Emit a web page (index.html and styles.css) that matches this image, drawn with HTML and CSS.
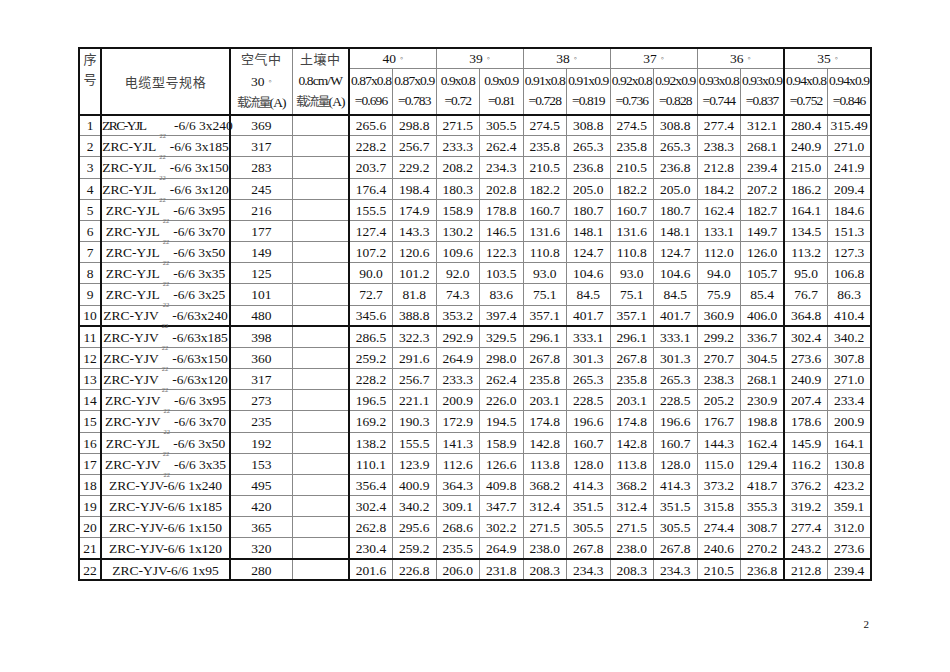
FILE: index.html
```html
<!DOCTYPE html>
<html lang="zh">
<head>
<meta charset="utf-8">
<title>电缆载流量表</title>
<link rel="stylesheet" href="styles.css">
</head>
<body>
<div class="page">
<table class="grid">
<colgroup>
<col class="c-no dk">
<col class="c-spec dk">
<col class="c-air">
<col class="c-soil dk">
<col class="c-v"><col class="c-v">
<col class="c-v"><col class="c-v">
<col class="c-v"><col class="c-v">
<col class="c-v"><col class="c-v">
<col class="c-v"><col class="c-v dk">
<col class="c-v"><col class="c-v dk">
</colgroup>
<thead>
<tr class="h1">
<th rowspan="2" class="no-h cjk">序<br>号</th>
<th rowspan="2" class="spec-h cjk">电缆型号规格</th>
<th rowspan="2" class="top-h"><span class="cjk wide-cjk">空气中</span><br>30<span class="deg">◦</span><br><span class="load"><span class="cjk squeeze">载流量</span><span class="cond">(A)</span></span></th>
<th rowspan="2" class="top-h"><span class="cjk wide-cjk">土壤中</span><br><span class="cond">0.8cm/W</span><br><span class="load"><span class="cjk squeeze">载流量</span><span class="cond">(A)</span></span></th>
<th colspan="2" class="grp">40<span class="deg">◦</span></th>
<th colspan="2" class="grp">39<span class="deg">◦</span></th>
<th colspan="2" class="grp">38<span class="deg">◦</span></th>
<th colspan="2" class="grp">37<span class="deg">◦</span></th>
<th colspan="2" class="grp">36<span class="deg">◦</span></th>
<th colspan="2" class="grp">35<span class="deg">◦</span></th>
</tr>
<tr class="h2">
<th class="fac"><span class="cond">0.87x0.8</span><br><span class="cond">=0.696</span></th>
<th class="fac"><span class="cond">0.87x0.9</span><br><span class="cond">=0.783</span></th>
<th class="fac"><span class="cond">0.9x0.8</span><br><span class="cond">=0.72</span></th>
<th class="fac"><span class="cond">0.9x0.9</span><br><span class="cond">=0.81</span></th>
<th class="fac"><span class="cond">0.91x0.8</span><br><span class="cond">=0.728</span></th>
<th class="fac"><span class="cond">0.91x0.9</span><br><span class="cond">=0.819</span></th>
<th class="fac"><span class="cond">0.92x0.8</span><br><span class="cond">=0.736</span></th>
<th class="fac"><span class="cond">0.92x0.9</span><br><span class="cond">=0.828</span></th>
<th class="fac"><span class="cond">0.93x0.8</span><br><span class="cond">=0.744</span></th>
<th class="fac"><span class="cond">0.93x0.9</span><br><span class="cond">=0.837</span></th>
<th class="fac"><span class="cond">0.94x0.8</span><br><span class="cond">=0.752</span></th>
<th class="fac"><span class="cond">0.94x0.9</span><br><span class="cond">=0.846</span></th>
</tr>
</thead>
<tbody>
<tr><td>1</td><td class="spec"><span class="tight">ZRC-YJL</span><span class="sub wide">22</span>-6/6 3x240</td><td>369</td><td></td><td>265.6</td><td>298.8</td><td>271.5</td><td>305.5</td><td>274.5</td><td>308.8</td><td>274.5</td><td>308.8</td><td>277.4</td><td>312.1</td><td>280.4</td><td>315.49</td></tr>
<tr><td>2</td><td class="spec">ZRC-YJL<span class="sub">22</span>-6/6 3x185</td><td>317</td><td></td><td>228.2</td><td>256.7</td><td>233.3</td><td>262.4</td><td>235.8</td><td>265.3</td><td>235.8</td><td>265.3</td><td>238.3</td><td>268.1</td><td>240.9</td><td>271.0</td></tr>
<tr><td>3</td><td class="spec">ZRC-YJL<span class="sub">22</span>-6/6 3x150</td><td>283</td><td></td><td>203.7</td><td>229.2</td><td>208.2</td><td>234.3</td><td>210.5</td><td>236.8</td><td>210.5</td><td>236.8</td><td>212.8</td><td>239.4</td><td>215.0</td><td>241.9</td></tr>
<tr><td>4</td><td class="spec">ZRC-YJL<span class="sub">22</span>-6/6 3x120</td><td>245</td><td></td><td>176.4</td><td>198.4</td><td>180.3</td><td>202.8</td><td>182.2</td><td>205.0</td><td>182.2</td><td>205.0</td><td>184.2</td><td>207.2</td><td>186.2</td><td>209.4</td></tr>
<tr><td>5</td><td class="spec">ZRC-YJL<span class="sub">22</span>-6/6 3x95</td><td>216</td><td></td><td>155.5</td><td>174.9</td><td>158.9</td><td>178.8</td><td>160.7</td><td>180.7</td><td>160.7</td><td>180.7</td><td>162.4</td><td>182.7</td><td>164.1</td><td>184.6</td></tr>
<tr><td>6</td><td class="spec">ZRC-YJL<span class="sub">22</span>-6/6 3x70</td><td>177</td><td></td><td>127.4</td><td>143.3</td><td>130.2</td><td>146.5</td><td>131.6</td><td>148.1</td><td>131.6</td><td>148.1</td><td>133.1</td><td>149.7</td><td>134.5</td><td>151.3</td></tr>
<tr><td>7</td><td class="spec">ZRC-YJL<span class="sub">22</span>-6/6 3x50</td><td>149</td><td></td><td>107.2</td><td>120.6</td><td>109.6</td><td>122.3</td><td>110.8</td><td>124.7</td><td>110.8</td><td>124.7</td><td>112.0</td><td>126.0</td><td>113.2</td><td>127.3</td></tr>
<tr><td>8</td><td class="spec">ZRC-YJL<span class="sub">22</span>-6/6 3x35</td><td>125</td><td></td><td>90.0</td><td>101.2</td><td>92.0</td><td>103.5</td><td>93.0</td><td>104.6</td><td>93.0</td><td>104.6</td><td>94.0</td><td>105.7</td><td>95.0</td><td>106.8</td></tr>
<tr><td>9</td><td class="spec">ZRC-YJL<span class="sub">22</span>-6/6 3x25</td><td>101</td><td></td><td>72.7</td><td>81.8</td><td>74.3</td><td>83.6</td><td>75.1</td><td>84.5</td><td>75.1</td><td>84.5</td><td>75.9</td><td>85.4</td><td>76.7</td><td>86.3</td></tr>
<tr class="sep"><td>10</td><td class="spec">ZRC-YJV<span class="sub">22</span>-6/63x240</td><td>480</td><td></td><td>345.6</td><td>388.8</td><td>353.2</td><td>397.4</td><td>357.1</td><td>401.7</td><td>357.1</td><td>401.7</td><td>360.9</td><td>406.0</td><td>364.8</td><td>410.4</td></tr>
<tr><td>11</td><td class="spec">ZRC-YJV<span class="sub">22</span>-6/63x185</td><td>398</td><td></td><td>286.5</td><td>322.3</td><td>292.9</td><td>329.5</td><td>296.1</td><td>333.1</td><td>296.1</td><td>333.1</td><td>299.2</td><td>336.7</td><td>302.4</td><td>340.2</td></tr>
<tr><td>12</td><td class="spec">ZRC-YJV<span class="sub">22</span>-6/63x150</td><td>360</td><td></td><td>259.2</td><td>291.6</td><td>264.9</td><td>298.0</td><td>267.8</td><td>301.3</td><td>267.8</td><td>301.3</td><td>270.7</td><td>304.5</td><td>273.6</td><td>307.8</td></tr>
<tr><td>13</td><td class="spec">ZRC-YJV<span class="sub">22</span>-6/63x120</td><td>317</td><td></td><td>228.2</td><td>256.7</td><td>233.3</td><td>262.4</td><td>235.8</td><td>265.3</td><td>235.8</td><td>265.3</td><td>238.3</td><td>268.1</td><td>240.9</td><td>271.0</td></tr>
<tr><td>14</td><td class="spec">ZRC-YJV<span class="sub">22</span>-6/6 3x95</td><td>273</td><td></td><td>196.5</td><td>221.1</td><td>200.9</td><td>226.0</td><td>203.1</td><td>228.5</td><td>203.1</td><td>228.5</td><td>205.2</td><td>230.9</td><td>207.4</td><td>233.4</td></tr>
<tr><td>15</td><td class="spec">ZRC-YJV<span class="sub">22</span>-6/6 3x70</td><td>235</td><td></td><td>169.2</td><td>190.3</td><td>172.9</td><td>194.5</td><td>174.8</td><td>196.6</td><td>174.8</td><td>196.6</td><td>176.7</td><td>198.8</td><td>178.6</td><td>200.9</td></tr>
<tr><td>16</td><td class="spec">ZRC-YJL<span class="sub">22</span>-6/6 3x50</td><td>192</td><td></td><td>138.2</td><td>155.5</td><td>141.3</td><td>158.9</td><td>142.8</td><td>160.7</td><td>142.8</td><td>160.7</td><td>144.3</td><td>162.4</td><td>145.9</td><td>164.1</td></tr>
<tr><td>17</td><td class="spec">ZRC-YJV<span class="sub">22</span>-6/6 3x35</td><td>153</td><td></td><td>110.1</td><td>123.9</td><td>112.6</td><td>126.6</td><td>113.8</td><td>128.0</td><td>113.8</td><td>128.0</td><td>115.0</td><td>129.4</td><td>116.2</td><td>130.8</td></tr>
<tr><td>18</td><td class="spec">ZRC-YJV-6/6 1x240</td><td>495</td><td></td><td>356.4</td><td>400.9</td><td>364.3</td><td>409.8</td><td>368.2</td><td>414.3</td><td>368.2</td><td>414.3</td><td>373.2</td><td>418.7</td><td>376.2</td><td>423.2</td></tr>
<tr><td>19</td><td class="spec">ZRC-YJV-6/6 1x185</td><td>420</td><td></td><td>302.4</td><td>340.2</td><td>309.1</td><td>347.7</td><td>312.4</td><td>351.5</td><td>312.4</td><td>351.5</td><td>315.8</td><td>355.3</td><td>319.2</td><td>359.1</td></tr>
<tr><td>20</td><td class="spec">ZRC-YJV-6/6 1x150</td><td>365</td><td></td><td>262.8</td><td>295.6</td><td>268.6</td><td>302.2</td><td>271.5</td><td>305.5</td><td>271.5</td><td>305.5</td><td>274.4</td><td>308.7</td><td>277.4</td><td>312.0</td></tr>
<tr class="sep"><td>21</td><td class="spec">ZRC-YJV-6/6 1x120</td><td>320</td><td></td><td>230.4</td><td>259.2</td><td>235.5</td><td>264.9</td><td>238.0</td><td>267.8</td><td>238.0</td><td>267.8</td><td>240.6</td><td>270.2</td><td>243.2</td><td>273.6</td></tr>
<tr><td>22</td><td class="spec">ZRC-YJV-6/6 1x95</td><td>280</td><td></td><td>201.6</td><td>226.8</td><td>206.0</td><td>231.8</td><td>208.3</td><td>234.3</td><td>208.3</td><td>234.3</td><td>210.5</td><td>236.8</td><td>212.8</td><td>239.4</td></tr>
</tbody>
</table>
<div class="pnum">2</div>
</div>
</body>
</html>
```
FILE: styles.css
```css
html, body {
  margin: 0;
  padding: 0;
  background: #fff;
}
body {
  font-family: "Liberation Serif", "Noto Sans CJK SC", serif;
  color: #111;
}
.page {
  width: 870px;
  padding: 47px 0 0 78px;
  box-sizing: border-box;
}
.grid {
  border-collapse: collapse;
  table-layout: fixed;
  width: 792px;
  border: 2px solid #111;
  font-size: 13.5px;
}
.c-no { width: 22px; }
.c-spec { width: 129px; }
.c-air { width: 62px; }
.c-soil { width: 57px; }
.c-v { width: 43.5px; }
col.dk { border-right: 2px solid #111; }

.grid th, .grid td {
  border: 1px solid #888;
  padding: 0;
  text-align: center;
  white-space: nowrap;
  font-weight: normal;
  overflow: visible;
}
.cjk {
  font-family: "Noto Sans CJK SC", sans-serif;
  color: #444;
  font-size: 13px;
}
.wide-cjk { letter-spacing: 0.5px; }
.h1 { height: 20px; }
.h2 { height: 44px; }
thead { border-bottom: 2px solid #111; }

.no-h {
  vertical-align: top;
  line-height: 20px;
  padding-top: 3px;
}
.spec-h {
  vertical-align: middle;
  letter-spacing: 0.6px;
  padding-top: 4px;
}
.top-h {
  vertical-align: top;
  line-height: 20.5px;
  padding-top: 3px;
}
.grp {
  vertical-align: middle;
  line-height: 17px;
  padding-top: 3px;
}
.fac {
  vertical-align: middle;
  line-height: 20.5px;
  padding-top: 3px;
}
.cond { letter-spacing: -0.9px; }
.load { white-space: nowrap; }
.squeeze { letter-spacing: -1.6px; font-size: 12.5px; }
.deg {
  font-size: 9px;
  margin-left: 4px;
  color: #555;
  vertical-align: 2px;
}

.grid tbody tr { height: 21.18px; }
.grid tbody td {
  line-height: 15px;
  padding-top: 1px;
}
.grid tbody tr.sep { border-bottom: 2px solid #111; }
.grid td.spec { text-align: center; }
.tight { letter-spacing: -1.5px; }
.sub {
  font-size: 6.5px;
  line-height: 0;
  color: #666;
  position: relative;
  top: 8px;
  margin: 0 4px 0 3px;
}
.sub.wide { margin: 0 8px 0 14px; }

.pnum {
  text-align: right;
  font-size: 11px;
  margin-top: 37px;
  padding-right: 1px;
}
```
